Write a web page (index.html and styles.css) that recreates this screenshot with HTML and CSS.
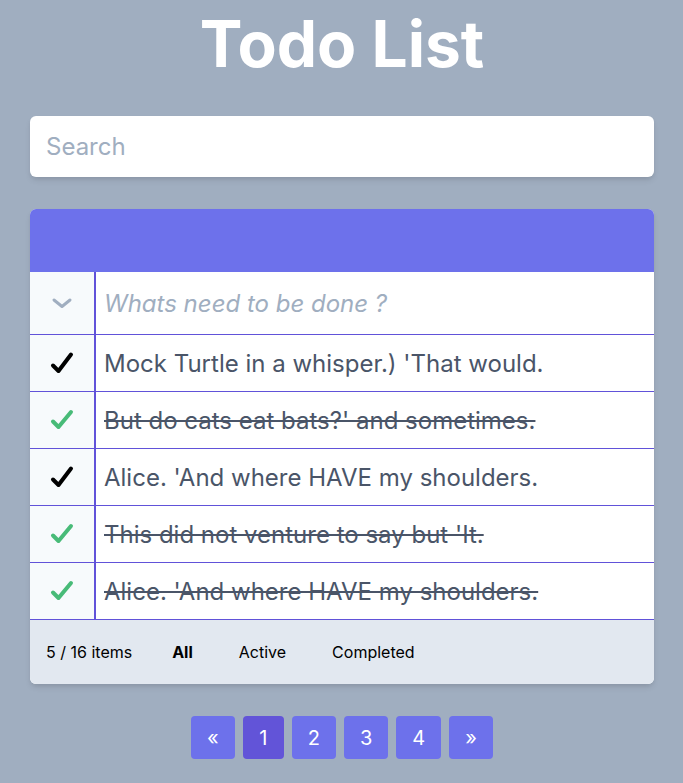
FILE: index.html
```html
<!DOCTYPE html>
<html>
<head>
<meta charset="utf-8">
<link rel="stylesheet" href="styles.css">
</head>
<body>
<div class="app">
  <h1 class="title">Todo List</h1>
  <input class="search" type="text" placeholder="Search">
  <div class="card">
    <div class="card-header"></div>
    <div class="row new-row">
      <div class="cell-icon">
        <svg width="22" height="12" viewBox="0 0 22 12"><path d="M3 3 L11 9.5 L19 3" fill="none" stroke="#a0aec0" stroke-width="3" stroke-linecap="round" stroke-linejoin="round"/></svg>
      </div>
      <input class="new-input" type="text" placeholder="Whats need to be done ?">
    </div>
    <div class="row">
      <div class="cell-icon"><svg class="check" width="28" height="28" viewBox="0 0 28 28"><path d="M5 16.5 L10.5 22 L23 5.5" fill="none" stroke="#000" stroke-width="4" stroke-linecap="round" stroke-linejoin="round"/></svg></div>
      <div class="cell-text">Mock Turtle in a whisper.) 'That would.</div>
    </div>
    <div class="row done">
      <div class="cell-icon"><svg class="check" width="28" height="28" viewBox="0 0 28 28"><path d="M5 15.5 L10.5 21 L23 6" fill="none" stroke="#48bb78" stroke-width="4" stroke-linecap="round" stroke-linejoin="round"/></svg></div>
      <div class="cell-text">But do cats eat bats?' and sometimes.</div>
    </div>
    <div class="row">
      <div class="cell-icon"><svg class="check" width="28" height="28" viewBox="0 0 28 28"><path d="M5 16.5 L10.5 22 L23 5.5" fill="none" stroke="#000" stroke-width="4" stroke-linecap="round" stroke-linejoin="round"/></svg></div>
      <div class="cell-text">Alice. 'And where HAVE my shoulders.</div>
    </div>
    <div class="row done">
      <div class="cell-icon"><svg class="check" width="28" height="28" viewBox="0 0 28 28"><path d="M5 15.5 L10.5 21 L23 6" fill="none" stroke="#48bb78" stroke-width="4" stroke-linecap="round" stroke-linejoin="round"/></svg></div>
      <div class="cell-text">This did not venture to say but 'It.</div>
    </div>
    <div class="row done">
      <div class="cell-icon"><svg class="check" width="28" height="28" viewBox="0 0 28 28"><path d="M5 15.5 L10.5 21 L23 6" fill="none" stroke="#48bb78" stroke-width="4" stroke-linecap="round" stroke-linejoin="round"/></svg></div>
      <div class="cell-text">Alice. 'And where HAVE my shoulders.</div>
    </div>
    <div class="card-footer">
      <span class="count">5 / 16 items</span>
      <span class="filter active">All</span>
      <span class="filter">Active</span>
      <span class="filter">Completed</span>
    </div>
  </div>
  <div class="pager">
    <span class="page">«</span>
    <span class="page current">1</span>
    <span class="page">2</span>
    <span class="page">3</span>
    <span class="page">4</span>
    <span class="page">»</span>
  </div>
</div>
</body>
</html>
```
FILE: styles.css
```css
html, body {
  margin: 0;
  padding: 0;
}
body {
  background: #a0aec0;
  font-family: Inter, "Noto Sans", sans-serif;
  color: #4a5568;
}
.app {
  padding: 12px 29px 0 30px;
  display: flex;
  flex-direction: column;
}
.title {
  margin: 0;
  font-size: 64px;
  line-height: 64px;
  font-weight: 700;
  color: #fff;
  text-align: center;
}
.search {
  margin-top: 40px;
  height: 61px;
  box-sizing: border-box;
  border: none;
  border-radius: 6px;
  padding: 0 16px;
  font-family: inherit;
  font-size: 24px;
  color: #4a5568;
  background: #fff;
  box-shadow: 0 4px 6px -1px rgba(0,0,0,0.1), 0 2px 4px -1px rgba(0,0,0,0.06);
  outline: none;
}
.search::placeholder {
  color: #a0aec0;
}
.card {
  margin-top: 32px;
  border-radius: 6px;
  overflow: hidden;
  background: #fff;
  box-shadow: 0 4px 6px -1px rgba(0,0,0,0.1), 0 2px 4px -1px rgba(0,0,0,0.06);
}
.card-header {
  height: 63px;
  background: #6d71eb;
}
.row {
  display: flex;
  height: 57px;
  border-top: 1px solid #6152d9;
  box-sizing: border-box;
}
.new-row {
  height: 62px;
  border-top: none;
}
.cell-icon {
  width: 64px;
  flex: none;
  background: #f7fafc;
  border-right: 2px solid #6152d9;
  display: flex;
  align-items: center;
  justify-content: center;
}
.new-input {
  flex: 1;
  border: none;
  outline: none;
  padding: 0 8px;
  font-family: inherit;
  font-size: 24px;
  font-style: italic;
  background: #fff;
  color: #4a5568;
}
.new-input::placeholder {
  color: #a0aec0;
}
.cell-text {
  flex: 1;
  display: flex;
  align-items: center;
  padding: 0 8px;
  font-size: 24px;
  color: #4a5568;
}
.done .cell-text {
  text-decoration: line-through;
}
.card-footer {
  height: 65px;
  background: #e2e8f0;
  border-top: 1px solid #6152d9;
  box-sizing: border-box;
  display: flex;
  align-items: center;
  padding: 0 16px;
  font-size: 16px;
  color: #000;
}
.count {
  margin-right: 17px;
}
.filter {
  padding: 0 23px;
}
.filter.active {
  font-weight: 700;
}
.pager {
  margin-top: 32px;
  display: flex;
  justify-content: center;
  gap: 8px;
}
.page {
  height: 43px;
  min-width: 41px;
  padding: 0 16px;
  box-sizing: border-box;
  display: flex;
  align-items: center;
  justify-content: center;
  background: #6d71eb;
  color: #fff;
  font-size: 20px;
  border-radius: 4px;
}
.page.current {
  background: #6254d8;
}
```
